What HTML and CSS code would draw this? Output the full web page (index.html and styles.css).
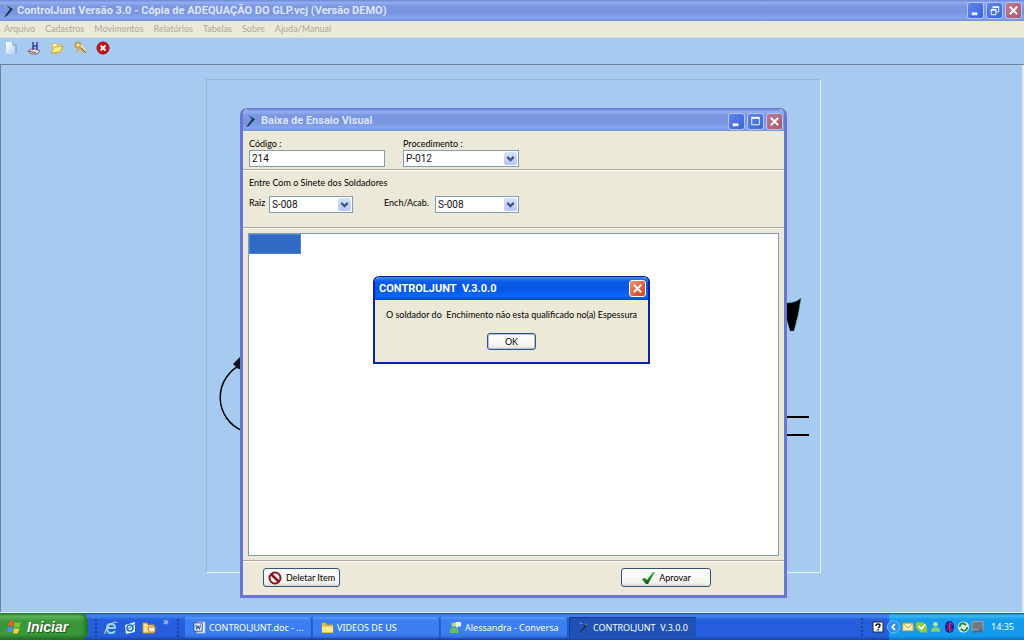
FILE: index.html
```html
<!DOCTYPE html>
<html lang="pt-BR">
<head>
<meta charset="utf-8">
<title>ControlJunt Versão 3.0</title>
<link rel="stylesheet" href="styles.css">
</head>
<body>
<svg class="defs" width="0" height="0" aria-hidden="true">
  <defs>
    <linearGradient id="paper" x1="0" y1="0" x2="1" y2="1"><stop offset="0" stop-color="#fff"/><stop offset="1" stop-color="#a9cdf0"/></linearGradient>
    <linearGradient id="green" x1="0" y1="0" x2="0" y2="1"><stop offset="0" stop-color="#35c735"/><stop offset="1" stop-color="#064d10"/></linearGradient>
    <symbol id="torch" viewBox="0 0 12 14"><path d="M2 2l7 2-5 8" fill="none" stroke="#8fb9d0" stroke-width="1"/><path d="M3 1l7 4L4 12l-3 1 6-8z" fill="#20384c"/></symbol>
    <symbol id="min" viewBox="0 0 16 16"><path d="M4 10h6v3H4z" fill="#fff"/></symbol>
    <symbol id="max" viewBox="0 0 16 16"><path d="M4 4.500h8v7H4z" fill="none" stroke="#fff"/><path d="M3.500 3h9v2h-9z" fill="#fff"/></symbol>
    <symbol id="restore" viewBox="0 0 16 16"><path d="M6.500 6V4.500h6v5H10M4.500 7.500h5v5h-5z" fill="none" stroke="#fff"/><path d="M6 3.500h7v1.500H6zM4 6.500h6V8H4z" fill="#fff"/></symbol>
    <symbol id="close" viewBox="0 0 16 16"><path d="M4 4l8 8M12 4l-8 8" stroke="#fff" stroke-width="2"/></symbol>
    <symbol id="arrow" viewBox="0 0 12 12"><path d="M3 4.500l3 3 3-3" fill="none" stroke="#3f5684" stroke-width="2"/></symbol>
  </defs>
</svg>

<header class="titlebar app-title">
  <svg class="torch"><use href="#torch"/></svg>
  <h1 class="title">ControlJunt Versão 3.0 - Cópia de ADEQUAÇÃO DO GLP.vcj (Versão DEMO)</h1>
  <button class="cap" aria-label="Minimizar"><svg><use href="#min"/></svg></button>
  <button class="cap" aria-label="Restaurar"><svg><use href="#restore"/></svg></button>
  <button class="cap cap-close" aria-label="Fechar"><svg><use href="#close"/></svg></button>
</header>

<nav class="menu">
  <button>Arquivo</button><button>Cadastros</button><button>Movimentos</button><button>Relatórios</button><button>Tabelas</button><button>Sobre</button><button>Ajuda/Manual</button>
</nav>

<div class="toolbar">
  <button aria-label="Novo"><svg viewBox="0 0 14 14"><path d="M2 1h7l3 3v9H2z" fill="url(#paper)"/><path d="M9 1v3h3v9" fill="none" stroke="#6d93bb"/></svg></button>
  <button aria-label="Soldar"><svg viewBox="0 0 14 14"><path d="M1 10l5-3 7 3-3 3-6 0z" fill="#e0dce0" stroke="#7a6a78"/><path d="M6 1v8M10 1v8M6 5h4" stroke="#3c3c9c" stroke-width="1.500"/><path d="M1 10l8 2" stroke="#a04848"/></svg></button>
  <button aria-label="Abrir"><svg viewBox="0 0 14 14"><path d="M2 3l4-1 1 2h5v7l-9 1z" fill="#fff6ad" stroke="#cbb458"/><path d="M1 12L4 6l9-1-3 6z" fill="#ffed80" stroke="#cba83c"/></svg></button>
  <button aria-label="Chaves"><svg viewBox="0 0 14 14"><circle cx="5" cy="4" r="2.500" fill="#fff4b8" stroke="#c99a48" stroke-width="2"/><path d="M6 6l6 6M6 6L4 11M9 9l2-2" stroke="#d8a850" stroke-width="2"/><path d="M8 4l4 5" stroke="#f8e0a0" stroke-width="2"/><path d="M8 7l5 5" stroke="#74683c"/></svg></button>
  <button aria-label="Sair"><svg viewBox="0 0 14 14"><circle cx="7" cy="7" r="6" fill="#cf0a18" stroke="#960812"/><path d="M4.500 4.500l5 5M9.500 4.500l-5 5" stroke="#fff" stroke-width="2"/></svg></button>
</div>

<main class="workspace">
  <div class="frame"></div>
  <svg class="weld weld-left" viewBox="0 0 24 80"><path d="M24 8A36 36 0 0 0 24 75" fill="none" stroke="#000" stroke-width="1.500"/><path d="M14 8l7-7h3v14l-6-3z" fill="#101418"/><path d="M24 31q-5 8 0 18z" fill="#000" stroke="#000"/></svg>
  <svg class="weld weld-right" viewBox="0 0 24 140"><path d="M0 5q10 0 15-5-2 16-7 33H4L0 19z" fill="#000" stroke="#2aa5a5" stroke-width=".5"/><path d="M0 119h23M0 137h23" stroke="#000" stroke-width="2"/></svg>

  <section class="window">
    <header class="titlebar">
      <svg class="torch"><use href="#torch"/></svg>
      <h2 class="title">Baixa de Ensaio Visual</h2>
      <button class="cap" aria-label="Minimizar janela"><svg><use href="#min"/></svg></button>
      <button class="cap" aria-label="Maximizar janela"><svg><use href="#max"/></svg></button>
      <button class="cap cap-close" aria-label="Fechar janela"><svg><use href="#close"/></svg></button>
    </header>
    <form class="client">
      <div class="panel fields">
        <div class="field code"><label for="codigo">Código :</label><input id="codigo" type="text" value="214"></div>
        <div class="field proc"><label for="proc">Procedimento :</label><span class="combo"><select id="proc"><option>P-012</option></select><svg><use href="#arrow"/></svg></span></div>
      </div>
      <div class="panel welders">
        <p>Entre Com o Sinete dos Soldadores</p>
        <div class="row">
          <label class="raiz" for="raiz">Raiz</label><span class="combo small"><select id="raiz"><option>S-008</option></select><svg><use href="#arrow"/></svg></span>
          <label class="ench" for="ench">Ench/Acab.</label><span class="combo small"><select id="ench"><option>S-008</option></select><svg><use href="#arrow"/></svg></span>
        </div>
      </div>
      <div class="list-area"><div class="list"><div class="cell"></div></div></div>
      <div class="actions">
        <button type="button" class="btn del"><svg viewBox="0 0 14 14"><circle cx="7" cy="7" r="5.500" fill="#fff" stroke="#8e1220" stroke-width="2"/><path d="M3 3l8 8" stroke="#8e1220" stroke-width="2.500"/></svg>Deletar Item</button>
        <button type="button" class="btn ok-item"><svg viewBox="0 0 14 14"><path d="M1 8l3-1 2 2 6-8 2 0-7 12H5z" fill="url(#green)"/></svg>Aprovar</button>
      </div>
    </form>
  </section>

  <section class="dialog" role="dialog" aria-labelledby="dlg">
    <header class="dialog-title">
      <h2 class="title" id="dlg">CONTROLJUNT&nbsp; V.3.0.0</h2>
      <button class="cap cap-red" aria-label="Fechar mensagem"><svg><use href="#close"/></svg></button>
    </header>
    <div class="dialog-body">
      <p>O soldador do&nbsp; Enchimento não esta qualificado no(a) Espessura</p>
      <button class="btn default">OK</button>
    </div>
  </section>
</main>

<footer class="taskbar">
  <button class="start"><svg viewBox="0 0 16 16"><path d="M2 3q3-2 5-.5L6 7.500Q4 6 1 7.500z" fill="#f25a26"/><path d="M8 3q3 1.500 6 0l-1.500 5Q10 9 7 8z" fill="#7ec832"/><path d="M1 8.500q3-1.500 5 0l-1 5q-2-1.500-5 0z" fill="#4d8df5"/><path d="M7 9q3 1.500 5.500 0L11 14q-3 1-5 0z" fill="#fbd034"/></svg>Iniciar</button>
  <div class="quick">
    <span class="grip"></span>
    <button aria-label="Internet"><svg viewBox="0 0 14 14"><path d="M3 7h8q0-4-4-4T3 7q0 5 4 5 3 0 4-2" fill="none" stroke="#8fd4ff" stroke-width="2"/><path d="M1 13Q0 9 6 4t7-2" fill="none" stroke="#f5d27c"/></svg></button>
    <button aria-label="Correio"><svg viewBox="0 0 14 14"><path d="M2 4l10-3v10L3 13z" fill="#e6f4fd"/><circle cx="7" cy="7" r="3" fill="none" stroke="#2278c0" stroke-width="1.500"/><path d="M5 8l7-5" stroke="#2278c0"/></svg></button>
    <button aria-label="Pastas"><svg viewBox="0 0 14 14"><path d="M1 2h4l1 2h6v8H1z" fill="#ffe28a" stroke="#c98d2c"/><path d="M6 6h7v5H7z" fill="#fff8da" stroke="#d07928"/></svg></button>
    <span class="more">»</span>
    <span class="grip"></span>
  </div>
  <div class="tasks">
    <button class="task"><svg viewBox="0 0 14 14"><path d="M4 1h9v12H4z" fill="#fff" stroke="#8aa2cf"/><path d="M1 2h9v9H1z" fill="#e8effc" stroke="#204ca0"/><path d="M3 4l1 5 1.500-4L7 9l1-5" fill="none" stroke="#1c429a"/></svg>CONTROLJUNT.doc - ...</button>
    <button class="task"><svg viewBox="0 0 14 14"><path d="M1 2h4l1 2h7v9H1z" fill="#e8b830"/><path d="M1 6h12v6H1z" fill="#ffe98c"/></svg>VIDEOS DE US</button>
    <button class="task"><svg viewBox="0 0 14 14"><circle cx="5" cy="4" r="2.500" fill="#9be07c"/><path d="M1 13V9q4-4 9 0v4z" fill="#65c155"/><path d="M7 1h6v5h-3L8 8V6H7z" fill="#eef8ff"/></svg>Alessandra - Conversa</button>
    <button class="task active"><svg class="torch"><use href="#torch"/></svg>CONTROLJUNT&nbsp; V.3.0.0</button>
  </div>
  <div class="lang"><span class="grip"></span><button aria-label="Ajuda"><svg viewBox="0 0 12 12"><path d="M1 1h10v10H1z" fill="#fff" stroke="#222"/><path d="M4 5q0-2 2-2t2 1.500Q8 5.500 6 7M6 8v1.500" fill="none" stroke="#111" stroke-width="1.500"/></svg></button></div>
  <div class="tray">
    <button aria-label="Expandir"><svg viewBox="0 0 14 14"><circle cx="7" cy="7" r="6.500" fill="#2b8df0" stroke="#7cc4ff"/><path d="M8.500 4l-3 3 3 3" fill="none" stroke="#fff" stroke-width="2"/></svg></button>
    <svg viewBox="0 0 14 14"><path d="M2 3h11v8H2z" fill="#fff1bb" stroke="#e0a43a"/><path d="M2 3l5.500 5L13 3" fill="none" stroke="#d98f2a"/></svg>
    <svg viewBox="0 0 14 14"><path d="M1 2h8l4 4v7H6L1 8z" fill="#8fce38"/><path d="M4 6l3 3 4-5" fill="none" stroke="#fff" stroke-width="2"/></svg>
    <svg viewBox="0 0 14 14"><circle cx="7" cy="4" r="2.500" fill="#b5e8a0"/><path d="M2 12q0-5 5-5t5 5z" fill="#83cf79"/></svg>
    <svg viewBox="0 0 14 14"><ellipse cx="7" cy="7" rx="5" ry="6.500" fill="#151f9b"/><path d="M4 4l6 6-3 2V2l3 2-6 6" fill="none" stroke="#e13555"/></svg>
    <svg viewBox="0 0 14 14"><circle cx="7" cy="7" r="6" fill="#e8f7e6"/><path d="M3 7q0-4 4-4l3 2M11 7q0 4-4 4L4 9" fill="none" stroke="#258a36" stroke-width="2"/></svg>
    <svg viewBox="0 0 14 14"><path d="M1 1h12v9H1z" fill="#737981" stroke="#a3a7aa"/><path d="M2 12h6l3-2v3" fill="none" stroke="#5b6068" stroke-width="2"/></svg>
    <time>14:35</time>
  </div>
</footer>
</body>
</html>
```
FILE: styles.css
```css
* { box-sizing: border-box; }
body {
  margin: 0;
  height: 100vh;
  display: flex;
  flex-direction: column;
  overflow: hidden;
  background: #a6caf0;
  font: 9px/12px Lato, sans-serif;
  color: #000;
}
button { font: inherit; color: inherit; padding: 0; border: 0; background: none; white-space: nowrap; }
svg { display: block; flex: none; }
h1, h2, p { margin: 0; }
.defs { position: absolute; }

.titlebar {
  display: flex;
  align-items: center;
  gap: 2px;
  background: linear-gradient(#6f88d8, #93aef0 12%, #7b96e0 30%, #7b96e0 65%, #84a6ee 85%, #7590dc);
}
.app-title { height: 21px; padding: 0 2px 0 3px; flex: none; }
.torch { width: 12px; height: 14px; }
.title { flex: 1; font: bold 11px/16px Roboto, sans-serif; color: #dbe5fb; white-space: nowrap; }
.cap {
  width: 17px;
  height: 17px;
  border: 1px solid #b3c5f4;
  border-radius: 3px;
  background: linear-gradient(135deg, #5f86ea, #3c62d8);
}
.cap svg { width: 15px; height: 15px; }
.cap-close { background: linear-gradient(135deg, #bb7c90, #a85a6c); }

.menu {
  display: flex;
  gap: 10px;
  flex: none;
  height: 17px;
  padding: 0 4px;
  background: #ece9d8;
  border-bottom: 1px solid #d5dde0;
  color: #aca899;
}
.toolbar {
  display: flex;
  align-items: flex-start;
  gap: 9px;
  flex: none;
  height: 27px;
  padding: 3px 4px;
  border-bottom: 1px solid #6d8299;
}
.toolbar svg { width: 14px; height: 14px; }

.workspace {
  position: relative;
  flex: 1;
  border-left: 1px solid #6d8299;
  border-right: 2px solid #dcebf8;
}
.frame {
  position: absolute;
  left: 205px;
  top: 14px;
  width: 615px;
  height: 494px;
  border: 1px solid #9ab5cf;
  border-right-color: #e9f5fd;
  border-bottom-color: #e9f5fd;
}
.weld { position: absolute; }
.weld-left { left: 218px; top: 291px; width: 24px; height: 80px; }
.weld-right { left: 785px; top: 233px; width: 24px; height: 140px; }

.window {
  position: absolute;
  left: 239px;
  top: 43px;
  width: 547px;
  height: 490px;
  display: flex;
  flex-direction: column;
  border: 3px solid #6a76d2;
  border-top-width: 1px;
  border-radius: 7px 7px 0 0;
  background: #ece9d8;
}
.window .titlebar { height: 22px; padding: 2px 1px 0 2px; border-radius: 6px 6px 0 0; flex: none; }
.window .titlebar .title { padding-left: 2px; }
.client {
  flex: 1;
  display: flex;
  flex-direction: column;
  line-height: 13px;
}
.panel { border-bottom: 1px solid #aca899; box-shadow: 0 1px #fff; padding: 0 6px; }
.fields { display: flex; gap: 18px; height: 39px; padding-top: 6px; }
.field { display: flex; flex-direction: column; }
.code { width: 136px; }
.proc { width: 116px; }
.client input, .client select {
  display: block;
  width: 100%;
  height: 17px;
  padding: 0 2px;
  border: 1px solid #7f9db9;
  border-radius: 0;
  background: #fff;
  font: 10px/15px Roboto, sans-serif;
  color: #111;
  appearance: none;
}
.combo { position: relative; display: block; }
.combo svg {
  position: absolute;
  right: 2px;
  top: 2px;
  width: 13px;
  height: 13px;
  border-radius: 2px;
  background: linear-gradient(#d6e2fd, #b4c8f6);
  pointer-events: none;
}
.welders { height: 58px; padding-top: 6px; }
.row { display: flex; padding-top: 7px; gap: 3px; }
.small { width: 84px; }
.raiz { width: 17px; }
.ench { margin-left: 28px; width: 48px; }
.list-area { flex: 1; padding: 5px 5px 4px; border-bottom: 1px solid #aca899; display: flex; }
.list { flex: 1; border: 1px solid #7f9db9; background: #fff; }
.cell { width: 52px; height: 20px; background: #316ac5; border: 1px solid #4f7fd0; }
.actions {
  display: flex;
  justify-content: space-between;
  align-items: center;
  height: 34px;
  padding: 0 73px 2px 20px;
  border-top: 1px solid #fff;
}
.btn {
  display: flex;
  align-items: center;
  justify-content: center;
  height: 19px;
  border: 1px solid #34527f;
  border-radius: 3px;
  background: linear-gradient(#fff, #f4f3ee 80%, #dcd8cc);
}
.btn svg { width: 14px; height: 14px; }
.del { width: 77px; gap: 4px; }
.ok-item { width: 90px; gap: 4px; }

.dialog {
  position: absolute;
  left: 372px;
  top: 211px;
  width: 277px;
  height: 88px;
  border: 2px solid #0a24a8;
  border-top-width: 1px;
  border-radius: 6px 6px 0 0;
  background: #ece9d8;
}
.dialog-title {
  display: flex;
  align-items: center;
  height: 23px;
  padding: 0 2px 0 4px;
  border-radius: 5px 5px 0 0;
  background: linear-gradient(#3c8cf8, #0c5ce8 20%, #0458e4 50%, #0a66fa 85%, #0446c8);
}
.dialog-title .title { color: #fff; }
.cap-red { border-color: #fff; background: linear-gradient(135deg, #f09070, #d44018); }
.dialog-body { display: flex; flex-direction: column; align-items: center; gap: 12px; padding-top: 9px; white-space: nowrap; }
.default { width: 49px; height: 17px; box-shadow: inset 0 0 0 1px #a9c2ee; }

.taskbar {
  display: flex;
  flex: none;
  height: 28px;
  border-top: 1px solid #d8effb;
  background: linear-gradient(#1f4fc0, #4389f0 10%, #265fde 25%, #245edb 85%, #1941a5);
  font-family: "Noto Sans", sans-serif;
  color: #fff;
}
.start {
  display: flex;
  align-items: center;
  gap: 4px;
  width: 88px;
  padding-left: 7px;
  border-radius: 0 8px 8px 0;
  background: linear-gradient(#2d7a2d, #5cb85a 12%, #3c963c 30%, #3a983a 80%, #246a24);
  box-shadow: inset -3px 0 4px #256e28;
  font: italic bold 14px/20px "Liberation Sans", sans-serif;
  text-shadow: 1px 1px 1px #1c4f1c;
}
.start svg { width: 16px; height: 16px; }
.quick { display: flex; align-items: center; width: 97px; padding: 2px 4px 0 7px; gap: 5px; flex: none; }
.quick svg { width: 14px; height: 14px; }
.grip { width: 4px; height: 18px; background: radial-gradient(circle at 1px 1px, #1a3f9e 1px, transparent 1px) 0 0 / 4px 4px; }
.more { padding-left: 2px; align-self: flex-start; font-size: 11px; color: #c8dcff; flex: 1; }
.tasks { display: flex; flex: 1; gap: 1px; padding: 4px 0 2px; }
.task {
  display: flex;
  align-items: center;
  gap: 3px;
  width: 127px;
  padding-left: 8px;
  border-radius: 2px;
  background: linear-gradient(#5a9afa, #3c81f3 15%, #3a7cf0 85%, #2b62d4);
  box-shadow: inset -1px 0 #2456be;
}
.task svg { width: 13px; height: 13px; }
.active { background: #1e52b7; box-shadow: inset 1px 1px #153b8c; }
.lang { display: flex; align-items: center; gap: 7px; padding-right: 5px; }
.lang svg { width: 12px; height: 12px; }
.tray {
  display: flex;
  align-items: center;
  gap: 1px;
  padding-right: 10px;
  background: linear-gradient(#0c59b9, #3ab8f4 10%, #159bec 25%, #139bec 85%, #0f6ec0);
}
.tray svg { width: 13px; height: 14px; }
.tray button { margin-left: -2px; }
.tray time { padding-left: 6px; }
```
